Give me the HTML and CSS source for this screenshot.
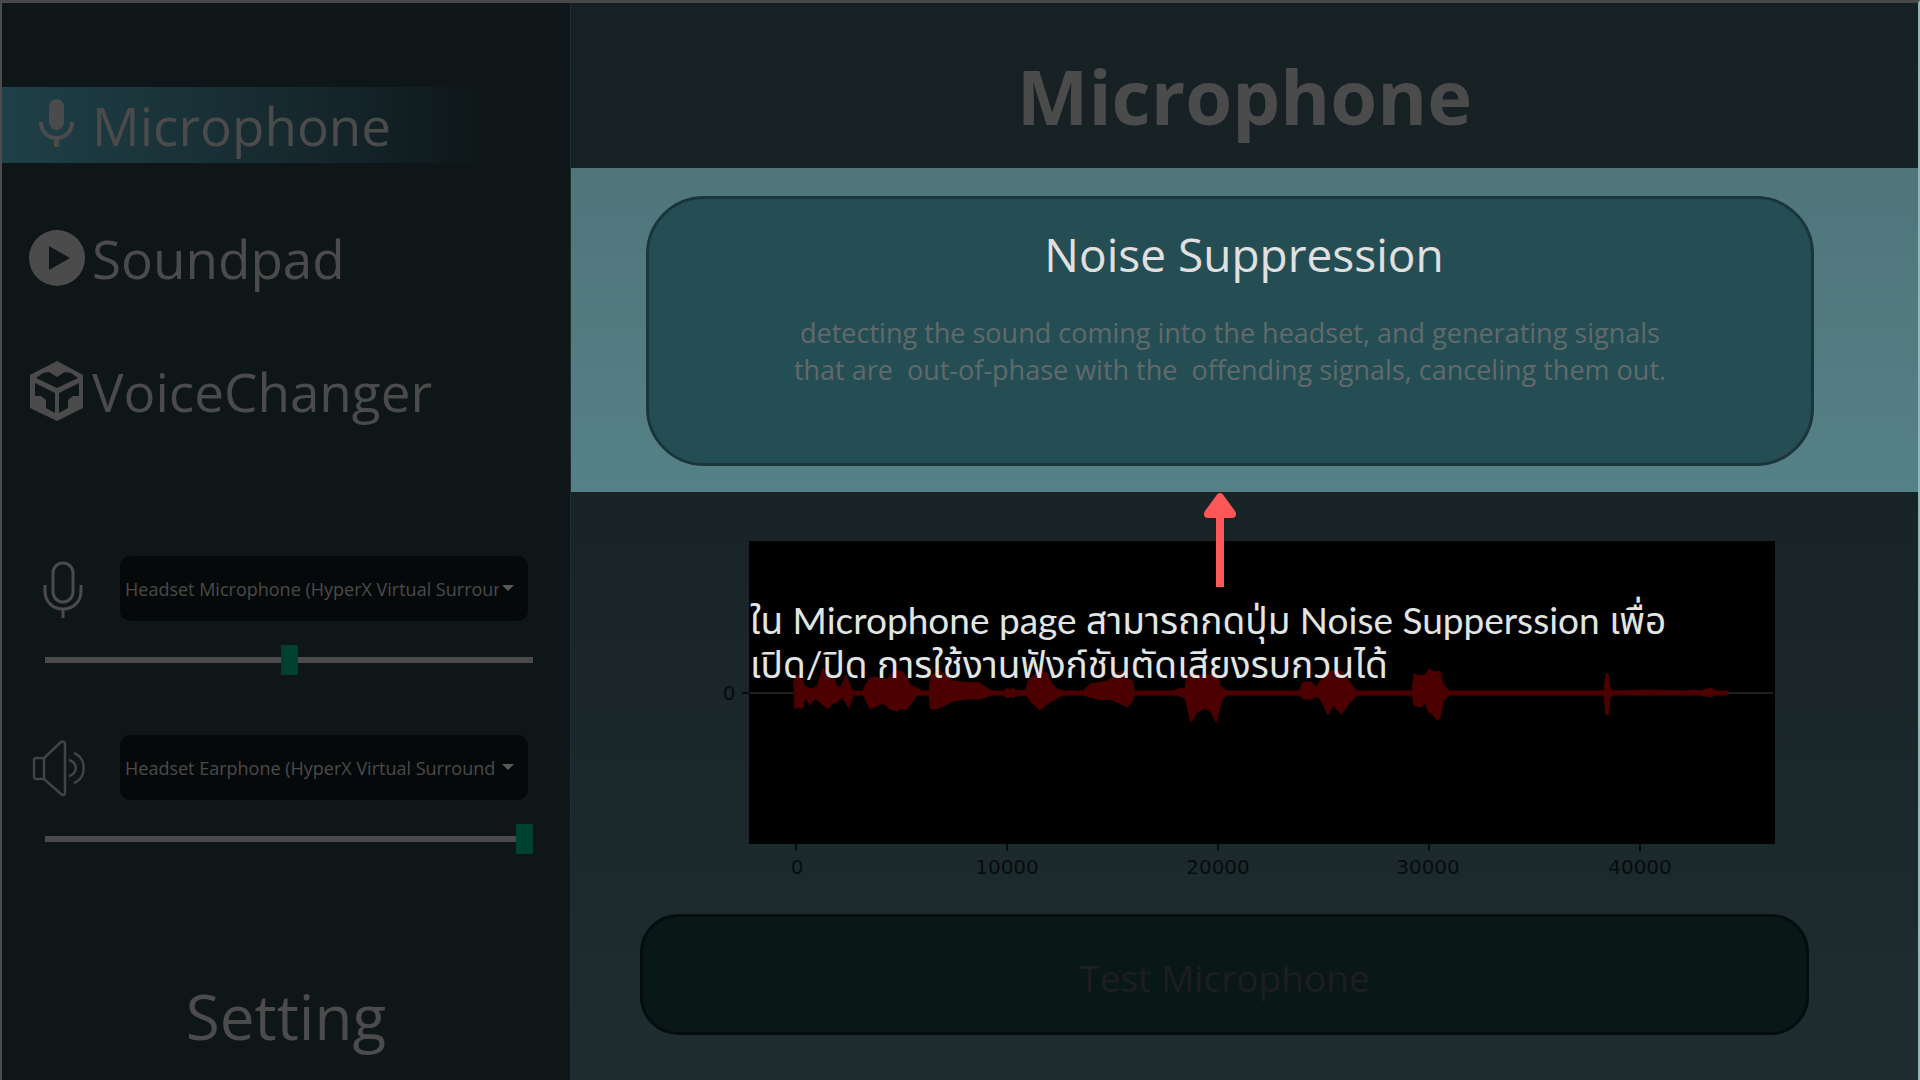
FILE: index.html
```html
<!DOCTYPE html>
<html lang="th">
<head>
<meta charset="utf-8">
<title>Microphone</title>
<meta name="viewport" content="width=device-width, initial-scale=1">
<link rel="stylesheet" href="styles.css">
</head>
<body>
<div class="app">
  <aside class="sidebar">
    <nav class="nav">
      <a class="nav-link nav-link-active" href="#microphone">
        <svg class="nav-icon" viewBox="0 0 58 62" aria-hidden="true">
          <rect x="21" y="5" width="15" height="31" rx="7.500" fill="currentColor"/>
          <path d="M13 28c0 10 7 16 15.500 16s15.500-6 15.500-16" fill="none" stroke="currentColor" stroke-width="4"/>
          <path d="M28.500 44v9" stroke="currentColor" stroke-width="5"/>
        </svg>
        <span>Microphone</span>
      </a>
      <a class="nav-link" href="#soundpad">
        <svg class="nav-icon" viewBox="0 0 58 62" aria-hidden="true">
          <path fill="currentColor" fill-rule="evenodd" d="M29 3a28 28 0 1 0 0 56a28 28 0 1 0 0-56zM21 19l21 12-21 12z"/>
        </svg>
        <span>Soundpad</span>
      </a>
      <a class="nav-link" href="#voicechanger">
        <svg class="nav-icon" viewBox="0 0 58 62" aria-hidden="true">
          <path fill="currentColor" fill-rule="evenodd" d="M29 1l26 14v33L29 61 2 48V15zM8 18l21 10 21-10-7-5-6-1-8 5-8-5-6 1zM7 23v13h6l5 4v8l9 5V33zM51 23v13h-6l-5 4v8l-9 5V33z"/>
        </svg>
        <span>VoiceChanger</span>
      </a>
    </nav>

    <section class="devices">
      <div class="device">
        <svg class="device-icon" viewBox="0 0 60 60" aria-hidden="true">
          <g fill="none" stroke="currentColor" stroke-width="3">
            <rect x="23" y="4" width="20" height="39" rx="10"/>
            <path d="M15 26v6c0 11 8 18 18 18s18-7 18-18v-6M33 50v9"/>
          </g>
        </svg>
        <div class="picker">
          <select class="picker-select" aria-label="Input device">
            <option>Headset Microphone (HyperX Virtual Surround Sound)</option>
          </select>
        </div>
        <input class="slider" type="range" min="0" max="100" value="50" aria-label="Input volume">
      </div>
      <div class="device">
        <svg class="device-icon" viewBox="0 0 60 60" aria-hidden="true">
          <g fill="none" stroke="currentColor" stroke-width="2.500" stroke-linejoin="round" opacity=".85">
            <path d="M6 20h8v21H6c-1 0-2-1-2-2V22c0-1 1-2 2-2zM14 20L31 4c2-1 4 0 4 2v49c0 2-2 3-4 1L14 41M39 22c9 3 9 13 0 16M44 15c13 5 13 25 0 30"/>
          </g>
        </svg>
        <div class="picker">
          <select class="picker-select" aria-label="Output device">
            <option>Headset Earphone (HyperX Virtual Surround Sound)</option>
          </select>
        </div>
        <input class="slider" type="range" min="0" max="100" value="100" aria-label="Output volume">
      </div>
    </section>

    <a class="setting" href="#setting">Setting</a>
  </aside>

  <main class="main">
    <header class="header"><h1 class="title">Microphone</h1></header>

    <section class="spotlight">
      <button class="suppression" type="button">
        <span class="suppression-title">Noise Suppression</span>
        <span class="suppression-text">detecting the sound coming into the headset, and generating signals
that are  out-of-phase with the  offending signals, canceling them out.</span>
      </button>
    </section>

    <section class="monitor">
      <svg class="chart" viewBox="0 0 1060 343" role="img" aria-label="Microphone waveform">
        <rect x="34" y="0" width="1026" height="303" fill="#000"/>
        <path d="M34 152H1058" stroke="#1f1f1f" stroke-width="2"/>
        <path class="wave" d="M79 152V136L84 134 88 140 90 146 96 148 102 146 105 136 108 127 113 136 120 139 122 146 126 146 131 134 135 144 138 150H148L151 143 155 137 160 136 166 138 172 138 180 129 188 131 193 138 195 144 202 147 207 150H214L216 134 225 130 238 140 255 142 263 141 272 147 277 150H290L292 147 295 149 298 147 302 150 311 149 313 140 322 131 332 132 336 142 342 148 348 150H368L375 143 392 140 400 134 407 130 412 138 418 140 419 150H458L467 147 470 148 472 135 478 133 490 134 503 133 505 145 512 150H584L588 141 597 141 601 147 605 140 612 130 627 130 635 142 642 150H697L699 133 705 135 710 134 714 128 719 131 725 130 728 143 734 150H889L891 133H893L895 147 898 150 932 149 970 150 977 149 985 150 996 147 1001 150H1013V154H1001L996 156 985 154H898L895 157 893 174H891L889 154H734L728 160 725 177 722 179 717 172 714 172 710 162 706 166 699 164 697 154H642L633 164 626 173 618 164 613 174 608 163 605 158 601 155 597 158H588L584 154H512L507 158 504 170 501 181 496 171 490 167 482 171 476 181 472 165 470 157 462 154H419L418 160 412 166 404 162 395 158 388 159 378 157 368 154H347L337 160 331 164 325 169 317 162 312 155 303 154 298 157 295 155 292 157 288 154H277L265 158 252 158 238 160 225 167 216 168 214 154H202L197 161 191 169 187 167 182 170 175 168 168 162 155 168 148 154H138L134 167 127 156 122 161 118 162 113 168 107 163 100 157 95 164 90 155 88 167 83 166 80 168Z"/>
        <path class="ticks" d="M27 152H34M81 303V310M292 303V310M503 303V310M714 303V310M925 303V310"/>
        <g class="tick-labels">
          <text x="14" y="159">0</text>
          <text x="82" y="333">0</text>
          <text x="292" y="333">10000</text>
          <text x="503" y="333">20000</text>
          <text x="713" y="333">30000</text>
          <text x="925" y="333">40000</text>
        </g>
      </svg>
      <button class="test" type="button">Test Microphone</button>

      <div class="hint">
        <svg class="hint-arrow" viewBox="0 0 32 96" aria-hidden="true">
          <path d="M12 95V26H4c-4 0-5-4-3-7L12 4c2-4 6-4 8 0l11 15c2 3 1 7-3 7h-8v69z" fill="#ff5757"/>
        </svg>
        <p class="hint-text">ใน Microphone page สามารถกดปุ่ม Noise Supperssion เพื่อ<br>เปิด/ปิด การใช้งานฟังก์ชันตัดเสียงรบกวนได้</p>
      </div>
    </section>
  </main>
</div>
</body>
</html>
```
FILE: styles.css
```css
* {
  box-sizing: border-box;
}

body {
  margin: 0;
  background: #0e1617;
  color: #4b4b4b;
  font-family: "Open Sans", "Noto Sans", sans-serif;
}

button,
select {
  font-family: inherit;
}

a {
  color: inherit;
  text-decoration: none;
}

.app {
  display: grid;
  grid-template-columns: 571px minmax(0, 1fr);
  min-height: 100vh;
  border-top: 3px solid #484848;
  border-right: 2px solid #8db7b8;
}

/* Sidebar */
.sidebar {
  display: flex;
  flex-direction: column;
  padding: 84px 0 24px;
  background: #0e1617;
  border-left: 2px solid #4b4b4b;
  border-right: 1px solid #1d3034;
}

.nav {
  display: flex;
  flex-direction: column;
  gap: 57px;
}

.nav-link {
  display: flex;
  align-items: center;
  gap: 6px;
  height: 76px;
  padding-left: 26px;
  font-size: 53px;
  line-height: 72px;
}

.nav-link span {
  padding-top: 2px;
}

.nav-link-active {
  background: linear-gradient(90deg, #1f4047, #14252a 60%, #0e1617 86%);
}

.nav-icon {
  width: 58px;
  height: 62px;
}

.devices {
  display: flex;
  flex-direction: column;
  gap: 60px;
  margin-top: 127px;
  padding: 0 37px 0 28px;
}

.device {
  display: grid;
  grid-template-columns: 60px minmax(0, 1fr);
  gap: 24px 30px;
  align-items: center;
}

.device-icon {
  width: 60px;
  height: 60px;
  overflow: visible;
}

.picker {
  position: relative;
  margin-right: 5px;
}

.picker::after {
  content: "";
  position: absolute;
  top: 29px;
  right: 14px;
  border: 6px solid transparent;
  border-top-color: #5a5a5a;
  border-bottom: 0;
  pointer-events: none;
}

.picker-select {
  display: block;
  width: 100%;
  height: 65px;
  padding: 0 29px 0 5px;
  overflow: hidden;
  appearance: none;
  background: #060909;
  border: 0;
  border-radius: 10px;
  color: #4b4b4b;
  font-size: 18px;
}

.slider {
  grid-column: 1 / -1;
  width: auto;
  height: 30px;
  margin: 0 0 0 15px;
  appearance: none;
  background: linear-gradient(#4b4b4b, #4b4b4b) center / 100% 6px no-repeat;
}

.slider::-webkit-slider-thumb {
  appearance: none;
  width: 17px;
  height: 30px;
  background: #00402e;
}

.setting {
  margin-top: auto;
  font-size: 62px;
  line-height: 80px;
  text-align: center;
}

/* Main panel */
.main {
  display: flex;
  flex-direction: column;
  background: linear-gradient(#172123, #182325 45%, #1f2d31);
}

.header {
  height: 165px;
  padding-top: 43px;
}

.title {
  margin: 0;
  font-size: 76px;
  line-height: 100px;
  text-align: center;
}

.spotlight {
  padding: 28px 104px 26px 75px;
  background: linear-gradient(#4f757b, #558186);
}

.suppression {
  display: flex;
  flex-direction: column;
  align-items: center;
  gap: 30px;
  width: 100%;
  min-height: 270px;
  padding: 25px 0;
  background: #254e54;
  border: 3px solid #1b363b;
  border-radius: 58px;
}

.suppression-title {
  padding-left: 28px;
  color: #e0e0e0;
  font-size: 46px;
  line-height: 60px;
}

.suppression-text {
  color: #616a6b;
  font-size: 27px;
  line-height: 37px;
  white-space: pre-wrap;
}

.monitor {
  position: relative;
  flex: 1;
  padding: 49px 109px 45px 69px;
}

.chart {
  display: block;
  width: calc(100% - 109px);
  margin-left: 75px;
}

.wave {
  fill: #4c0000;
  stroke: #4c0000;
}

.ticks {
  fill: none;
  stroke: #070b0c;
  stroke-width: 2;
}

.tick-labels {
  fill: #080c0d;
  font-family: "DejaVu Sans", sans-serif;
  font-size: 20px;
  text-anchor: middle;
}

.test {
  display: block;
  width: 100%;
  height: 121px;
  margin-top: 30px;
  padding: 6px 0 0;
  background: #0a1717;
  border: 3px solid #050d0e;
  border-radius: 38px;
  color: #1d1e1e;
  font-size: 37px;
}

/* Callout over the waveform */
.hint {
  position: absolute;
  top: 0;
  left: 179px;
  right: 79px;
  color: #e1e5e4;
}

.hint-arrow {
  display: block;
  width: 32px;
  height: 96px;
  margin-left: 454px;
}

.hint-text {
  margin: 10px 0 0;
  font-family: Lato, "Noto Sans Thai", sans-serif;
  font-size: 37px;
  line-height: 44px;
}
```
